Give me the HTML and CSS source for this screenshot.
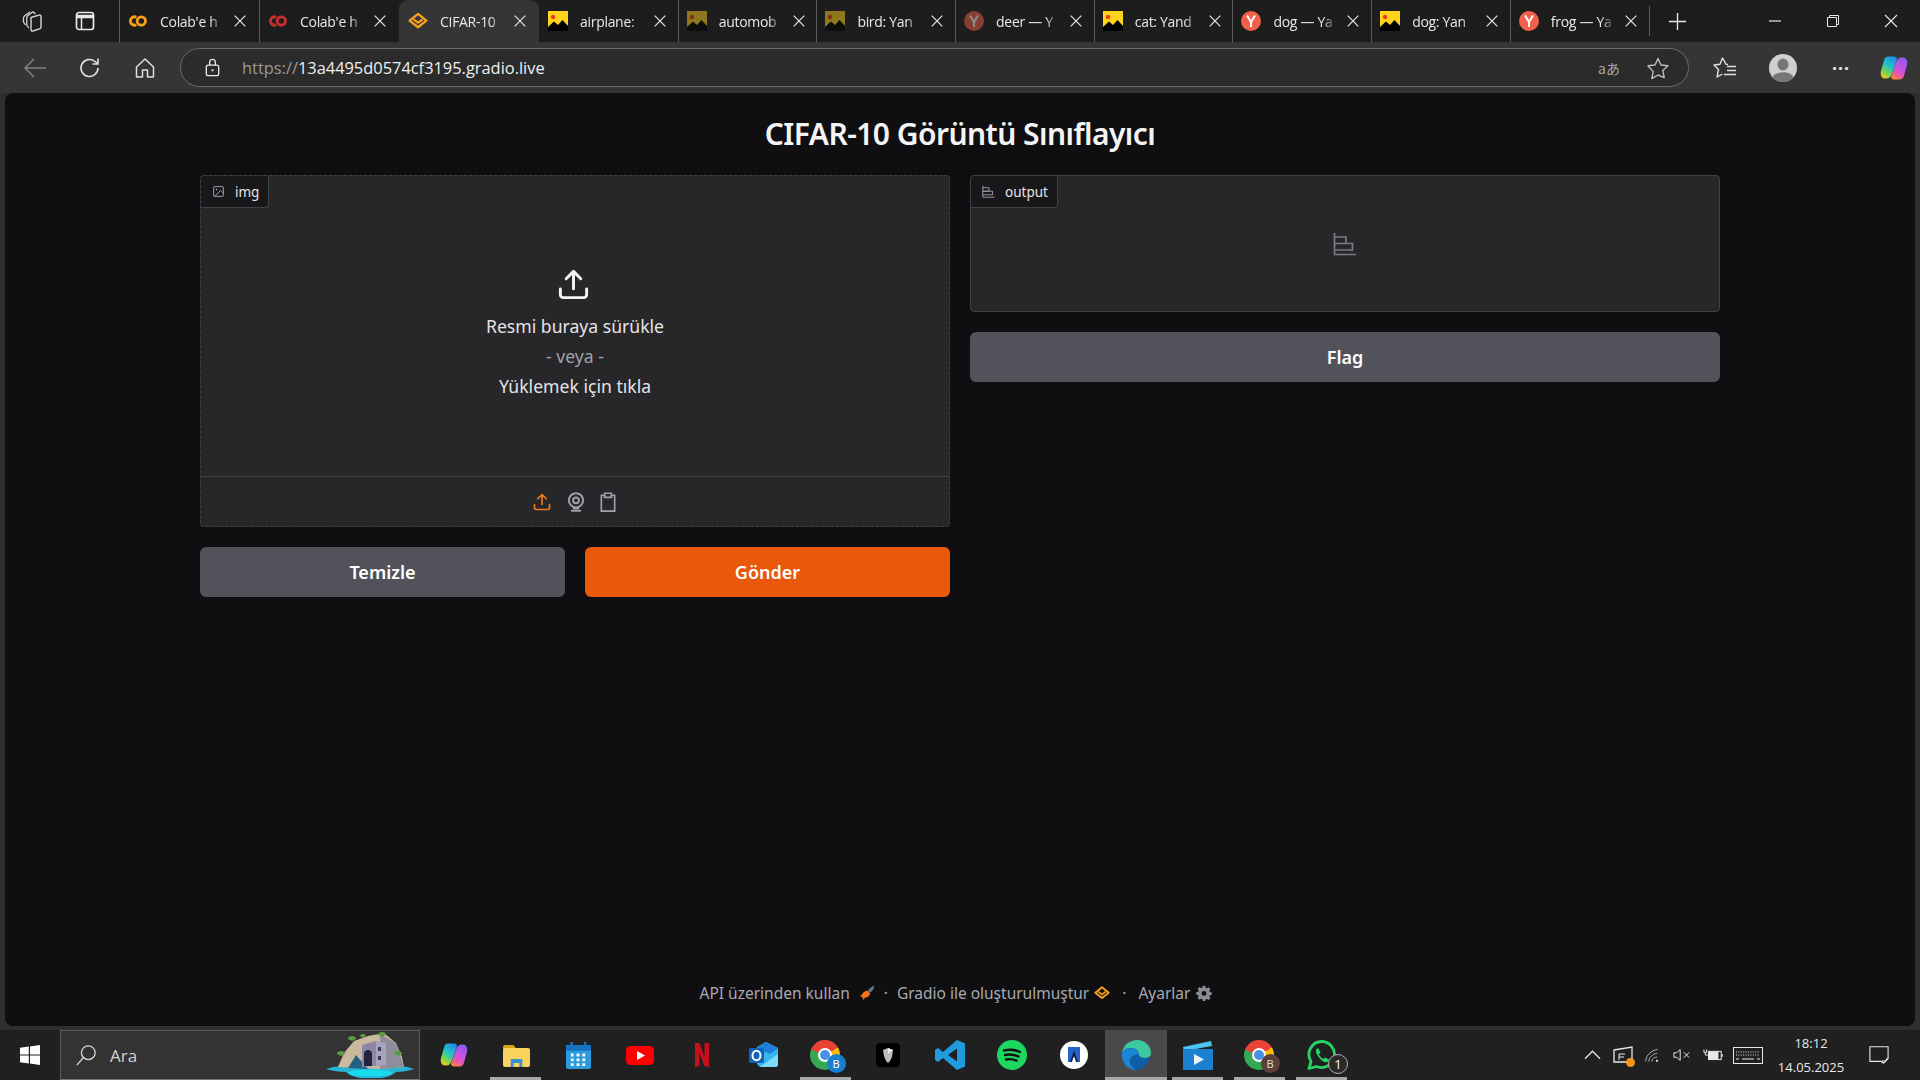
FILE: index.html
```html
<!DOCTYPE html>
<html lang="en">
    <head>
        <meta charset="UTF-8">
        <meta name="viewport" content="width=device-width, initial-scale=1.0">
        <title>CIFAR-10 Görüntü Sınıflayıcı</title>
        <link rel="stylesheet" href="styles.css">
    </head>
    <body>
        <svg class="defs" width="0" height="0">
            <defs>
                <linearGradient id="cp-left" x1="0.7" y1="0" x2="0.2" y2="1">
                    <stop offset="0" stop-color="#1f8fe8"/>
                    <stop offset=".45" stop-color="#22c8c0"/>
                    <stop offset=".75" stop-color="#7ed348"/>
                    <stop offset="1" stop-color="#f7c81e"/>
                </linearGradient>
                <linearGradient id="cp-right" x1="0.7" y1="0" x2="0.3" y2="1">
                    <stop offset="0" stop-color="#8a5cf0"/>
                    <stop offset=".55" stop-color="#d050e0"/>
                    <stop offset=".85" stop-color="#f0608a"/>
                    <stop offset="1" stop-color="#f58a30"/>
                </linearGradient>
                <symbol id="i-colab" viewBox="0 0 24 24">
                    <path d="M10 7.500a5 5 0 1 0 0 9" fill="none" stroke="currentColor" stroke-width="3.400"/>
                    <circle cx="16" cy="12" r="5" fill="none" stroke="currentColor" stroke-width="3.400"/>
                </symbol>
                <symbol id="i-gradio" viewBox="0 0 24 24">
                    <path d="M12 3.500 22 11.500 12 19.500 2 11.500Z" fill="none" stroke="currentColor" stroke-width="2.800" stroke-linejoin="round"/>
                    <path d="M6.500 10 12 14 17.500 10" fill="none" stroke="currentColor" stroke-width="2.600"/>
                </symbol>
                <symbol id="i-photo" viewBox="0 0 20 20">
                    <rect width="20" height="20" fill="#ffd21e"/>
                    <circle cx="5" cy="6" r="2.200" fill="#f03a17"/>
                    <path d="M0 20V16L6 10.500 10 14 14.500 9 20 15V20Z" fill="#000"/>
                </symbol>
                <symbol id="i-yandex" viewBox="0 0 20 20">
                    <circle cx="10" cy="10" r="10" fill="#f0604a"/>
                    <path d="M6 4.500 10 11V16M14 4.500 10 11" fill="none" stroke="#fff" stroke-width="2"/>
                </symbol>
                <symbol id="i-x" viewBox="0 0 12 12">
                    <path d="M.7.7l10.600 10.600M11.300.7.7 11.300" stroke="currentColor" stroke-width="1.200"/>
                </symbol>
                <symbol id="i-upload" viewBox="0 0 24 24">
                    <path d="M21 15v4a2 2 0 0 1-2 2H5a2 2 0 0 1-2-2v-4M17 8l-5-5-5 5M12 3v12" fill="none" stroke="currentColor" stroke-width="2" stroke-linecap="round" stroke-linejoin="round"/>
                </symbol>
                <symbol id="i-chart" viewBox="0 0 24 24">
                    <path d="M1.500 1V22.500H23M1.500 5H13V11.500H1.500M1.500 11.500H19.500V18H1.500" fill="none" stroke="currentColor" stroke-width="1.700"/>
                </symbol>
                <symbol id="i-copilot" viewBox="0 0 28 26">
                    <path d="M8 1.500h6c2 0 3.500 1.200 2.800 3.200L12 18.500c-1 3-3 5-5.500 5H5C1.800 23.500 0 20 1 16L4 5.500C4.600 3 6 1.500 8 1.500Z" fill="url(#cp-left)"/>
                    <path d="M20 24.500h-6c-2 0-3.500-1.200-2.800-3.200L16 7.500c1-3 3-5 5.500-5H23c3.200 0 5 3.500 4 7.500l-3 10.500c-.6 2.500-2 4-4 4Z" fill="url(#cp-right)"/>
                </symbol>
            </defs>
        </svg>

        <div class="screen">
            <header class="tabstrip">
                <div class="strip-left">
                    <svg class="strip-ico" viewBox="0 0 24 24"><path d="M11 8.500 19 6.200c1.300-.4 2 .3 2 1.500V18c0 1-.5 1.600-1.500 1.900L13 22c-1.300.4-2-.3-2-1.500Z" fill="none" stroke="#d6d6d6" stroke-width="1.400" stroke-linejoin="round"/><path d="M15.500 5 14 3.500c-.8-.7-1.600-.6-2.300 0L7.500 7c-.5.5-.7 1-.7 1.700V16l2 3" fill="none" stroke="#d6d6d6" stroke-width="1.300"/><path d="M10 3 5 6.500c-1 .8-1.500 1.400-1.500 2.500V13l2 3" fill="none" stroke="#d6d6d6" stroke-width="1.300"/></svg>
                    <svg class="strip-ico" viewBox="0 0 24 24"><rect x="3.500" y="3.500" width="17" height="17" rx="2.500" fill="none" stroke="#e8e8e8" stroke-width="1.700"/><path d="M3.500 7.500h17" stroke="#e8e8e8" stroke-width="3.500"/><path d="M8.500 8v12" stroke="#e8e8e8" stroke-width="1.500"/></svg>
                </div>
                <div class="tab tab-wide"><svg class="fav fav-orange"><use href="#i-colab"/></svg><span class="tab-title">Colab'e h</span><svg class="tab-x"><use href="#i-x"/></svg></div>
                <div class="tab tab-wide"><svg class="fav fav-red"><use href="#i-colab"/></svg><span class="tab-title">Colab'e h</span><svg class="tab-x"><use href="#i-x"/></svg></div>
                <div class="tab tab-active"><svg class="fav fav-orange"><use href="#i-gradio"/></svg><span class="tab-title">CIFAR-10</span><svg class="tab-x"><use href="#i-x"/></svg></div>
                <div class="tab"><svg class="fav"><use href="#i-photo"/></svg><span class="tab-title">airplane:</span><svg class="tab-x"><use href="#i-x"/></svg></div>
                <div class="tab"><svg class="fav fav-dim"><use href="#i-photo"/></svg><span class="tab-title">automob</span><svg class="tab-x"><use href="#i-x"/></svg></div>
                <div class="tab"><svg class="fav fav-dim"><use href="#i-photo"/></svg><span class="tab-title">bird: Yan</span><svg class="tab-x"><use href="#i-x"/></svg></div>
                <div class="tab"><svg class="fav fav-dim"><use href="#i-yandex"/></svg><span class="tab-title">deer — Y</span><svg class="tab-x"><use href="#i-x"/></svg></div>
                <div class="tab"><svg class="fav"><use href="#i-photo"/></svg><span class="tab-title">cat: Yand</span><svg class="tab-x"><use href="#i-x"/></svg></div>
                <div class="tab"><svg class="fav"><use href="#i-yandex"/></svg><span class="tab-title">dog — Ya</span><svg class="tab-x"><use href="#i-x"/></svg></div>
                <div class="tab"><svg class="fav"><use href="#i-photo"/></svg><span class="tab-title">dog: Yan</span><svg class="tab-x"><use href="#i-x"/></svg></div>
                <div class="tab"><svg class="fav"><use href="#i-yandex"/></svg><span class="tab-title">frog — Ya</span><svg class="tab-x"><use href="#i-x"/></svg></div>
                <div class="tab-plus"><svg viewBox="0 0 20 20"><path d="M10 1v18M1 10h18" stroke="#e8e8e8" stroke-width="1.400"/></svg></div>
                <div class="win-btns">
                    <svg viewBox="0 0 14 14"><path d="M1 7h12" stroke="#e8e8e8" stroke-width="1.200"/></svg>
                    <svg viewBox="0 0 14 14"><path d="M1.500 3.500h9v9h-9ZM3.500 3.500V1.500h9v9h-2" fill="none" stroke="#e8e8e8" stroke-width="1"/></svg>
                    <svg viewBox="0 0 14 14"><path d="M1 1l12 12M13 1 1 13" stroke="#e8e8e8" stroke-width="1.100"/></svg>
                </div>
            </header>

            <div class="toolbar">
                <div class="nav-btns">
                    <svg viewBox="0 0 24 24"><path d="M23 12H2M11 3l-9 9 9 9" fill="none" stroke="#808080" stroke-width="1.500"/></svg>
                    <svg viewBox="0 0 24 24"><path d="M20 12a8.500 8.500 0 1 1-3-6.500L20 8M20 2.500V8h-5.500" fill="none" stroke="#e0e0e0" stroke-width="1.600"/></svg>
                    <svg viewBox="0 0 24 24"><path d="M3.500 11 12 3l8.500 8v10h-6v-7h-5v7h-6Z" fill="none" stroke="#e0e0e0" stroke-width="1.500" stroke-linejoin="round"/></svg>
                </div>
                <div class="urlbar">
                    <svg class="lock" viewBox="0 0 20 20"><rect x="3.500" y="7.500" width="13" height="11" rx="2" fill="none" stroke="#e8e8e8" stroke-width="1.400"/><path d="M7 7.500V4.500a3 3 0 0 1 6 0v3" fill="none" stroke="#e8e8e8" stroke-width="1.400"/><circle cx="10" cy="13" r="1.200" fill="#e8e8e8"/></svg>
                    <span class="url"><span class="url-scheme">https://</span>13a4495d0574cf3195.gradio.live</span>
                    <span class="translate">aあ</span>
                    <svg class="star" viewBox="0 0 24 24"><path d="M12 2.500 15 9l7 .8-5.200 4.800 1.400 7L12 19l-6.200 3.600 1.400-7L2 9.800 9 9Z" fill="none" stroke="#bdbdbd" stroke-width="1.400" stroke-linejoin="round"/></svg>
                </div>
                <div class="tool-right">
                    <svg class="favs" viewBox="0 0 24 24"><path d="M15 8.500 13 8.200 9.500 2 7 8.200 1 9l4.500 4.500L4 21l5.500-3" fill="none" stroke="#e0e0e0" stroke-width="1.400" stroke-linejoin="round"/><path d="M14 10.500h9M14 14.500h9M11 18.500h12" stroke="#e0e0e0" stroke-width="1.400"/></svg>
                    <svg class="avatar" viewBox="0 0 28 28"><circle cx="14" cy="14" r="14" fill="#cfcfcf"/><ellipse cx="14" cy="10.500" rx="5.500" ry="6" fill="#777"/><path d="M3.500 23.500c2-7 19-7 21 0-5 6-16 6-21 0Z" fill="#777"/></svg>
                    <span class="more">···</span>
                    <svg class="copilot-top"><use href="#i-copilot"/></svg>
                </div>
            </div>

            <main class="page">
                <h1 class="title">CIFAR-10 Görüntü Sınıflayıcı</h1>
                <div class="columns">
                    <section class="col">
                        <div class="panel panel-input">
                            <div class="block-label">
                                <svg viewBox="0 0 24 24"><rect x="3" y="3" width="18" height="18" rx="2" fill="none" stroke="currentColor" stroke-width="1.800"/><circle cx="8.500" cy="8.500" r="1.500" fill="currentColor"/><path d="M21 15l-5-5L5 21" fill="none" stroke="currentColor" stroke-width="1.800"/></svg>
                                img
                            </div>
                            <div class="dropzone">
                                <svg class="drop-ico"><use href="#i-upload"/></svg>
                                <div class="drop-line">Resmi buraya sürükle</div>
                                <div class="drop-line drop-or">- veya -</div>
                                <div class="drop-line">Yüklemek için tıkla</div>
                            </div>
                            <div class="source-row">
                                <svg class="src-ico src-on"><use href="#i-upload"/></svg>
                                <svg class="src-ico" viewBox="0 0 24 24"><circle cx="12" cy="10" r="8.500" fill="none" stroke="currentColor" stroke-width="2.400"/><circle cx="12" cy="10" r="3.500" fill="none" stroke="currentColor" stroke-width="2.400"/><path d="M6 22.500h12M8.500 19.500h7" stroke="currentColor" stroke-width="2.200"/></svg>
                                <svg class="src-ico src-clip" viewBox="0 0 24 24"><path d="M8 4H4v19h16V4H16" fill="none" stroke="currentColor" stroke-width="2"/><path d="M8 1.500h8v5H8Z" fill="none" stroke="currentColor" stroke-width="2"/></svg>
                            </div>
                        </div>
                        <div class="btn-row">
                            <button class="btn btn-secondary">Temizle</button>
                            <button class="btn btn-primary">Gönder</button>
                        </div>
                    </section>
                    <section class="col">
                        <div class="panel panel-output">
                            <div class="block-label">
                                <svg><use href="#i-chart"/></svg>
                                output
                            </div>
                            <svg class="empty-ico"><use href="#i-chart"/></svg>
                        </div>
                        <button class="btn btn-secondary">Flag</button>
                    </section>
                </div>
                <footer class="page-foot">
                    <span>API üzerinden kullan</span>
                    <svg class="foot-ico" viewBox="0 0 20 20"><path d="M11 7.500C13 4 16 2 19 1c0 3-2 7-6 9Z" fill="#6b7280"/><path d="M10 7l4 4c-1 3-4 5-7 5l-1 3-2-4-3-1 3-2c0-2 3-4 6-5Z" fill="#f97316"/></svg>
                    <span class="foot-dot">·</span>
                    <span>Gradio ile oluşturulmuştur</span>
                    <svg class="foot-ico foot-logo"><use href="#i-gradio"/></svg>
                    <span class="foot-dot foot-dot-wide">·</span>
                    <span>Ayarlar</span>
                    <svg class="foot-ico foot-gear" viewBox="0 0 20 20"><path d="M8.500 1h3l.5 2.400 1.700.7L15.800 2.800l2.200 2.200-1.300 2.100.7 1.700 2.400.5v3l-2.400.5-.7 1.700 1.300 2.100-2.200 2.200-2.100-1.300-1.700.7-.5 2.400h-3L8 17.900l-1.700-.7-2.100 1.300L2 16.300l1.300-2.100-.7-1.700L.2 12V9l2.400-.5.7-1.700L2 4.700 4.200 2.500l2.100 1.300L8 3.100Z" fill="#8b8b93"/><circle cx="10" cy="10.500" r="3" fill="#0f0f11"/></svg>
                </footer>
            </main>

            <footer class="taskbar">
                <div class="start">
                    <svg viewBox="0 0 20 20"><path d="M0 2.800 8.800 1.600V9.400H0ZM10 1.400 20 0V9.400H10ZM0 10.600H8.800V18.400L0 17.200ZM10 10.600H20V20L10 18.600Z" fill="#fff"/></svg>
                </div>
                <div class="search">
                    <svg class="search-ico" viewBox="0 0 24 24"><circle cx="14.500" cy="9.500" r="7.500" fill="none" stroke="#d8d8d8" stroke-width="1.400"/><path d="M9 15 2 23" stroke="#d8d8d8" stroke-width="1.400"/></svg>
                    <span class="search-text">Ara</span>
                    <svg class="island" viewBox="0 0 88 48">
                        <path d="M0 38c10-3 20-4 30-4h30c10 0 20 1 28 4-6 2-12 3-18 3-3 3-8 5-14 6H34c-6-1-11-3-14-6-6 0-14-1-20-3Z" fill="#28b4d4"/>
                        <ellipse cx="44" cy="42" rx="22" ry="3.500" fill="#18dcec"/>
                        <path d="M12 36 18 22 28 10 42 5 58 2 70 12 76 26 78 36 54 38 30 37Z" fill="#cbb99c"/>
                        <path d="M54 3 70 12 78 36 54 38Z" fill="#8f8f9c"/>
                        <path d="M22 37 30 24 42 38Z" fill="#235f80"/>
                        <path d="M36 14 50 10 60 12V34L36 36Z" fill="#8d85aa"/>
                        <path d="M50 10 60 12V34L50 35Z" fill="#a9a2bf"/>
                        <path d="M38 35V23a3.500 3.500 0 0 1 8 0V35Z" fill="#26263a"/>
                        <path d="M52 16h3v4h-3ZM52 25h3v4h-3Z" fill="#3a3a55"/>
                        <path d="M22 8a4 3 0 0 1 8 0l-4 2Z M52 4a4 3 0 0 1 8 0l-4 2Z M11 23a4 3 0 0 1 8 0l-4 2Z M68 23a4 3 0 0 1 8 0l-4 2Z M34 5a3 2 0 0 1 6 0l-3 2Z" fill="#5d9a48"/>
                    </svg>
                </div>
                <div class="task-icons">
                    <div class="task"><svg class="t-copilot"><use href="#i-copilot"/></svg></div>
                    <div class="task task-open">
                        <svg class="t-files" viewBox="0 0 28 23" preserveAspectRatio="none"><path d="M0 3a2 2 0 0 1 2-2h9l3 4H0Z" fill="#d9a514"/><rect y="4" width="28" height="19" rx="2" fill="#f8d35e"/><path d="M8 23V15h12v8h-3v-4h-6v4Z" fill="#3a8ed4"/></svg>
                    </div>
                    <div class="task">
                        <svg class="t-cal" viewBox="0 0 26 28"><rect y="3" width="26" height="25" rx="2" fill="#2a9bdf"/><rect y="3" width="26" height="6" fill="#1770c0"/><path d="M6 0v6M20 0v6" stroke="#1770c0" stroke-width="2.500"/><path d="M5 12h3v3H5Zm6 0h3v3h-3Zm6 0h3v3h-3ZM5 17h3v3H5Zm6 0h3v3h-3Zm6 0h3v3h-3ZM5 22h3v3H5Zm6 0h3v3h-3Zm6 0h3v3h-3Z" fill="#fff"/></svg>
                    </div>
                    <div class="task">
                        <svg class="t-yt" viewBox="0 0 28 19"><rect width="28" height="19" rx="4.500" fill="#f00"/><path d="M11 5l8 4.500-8 4.500Z" fill="#fff"/></svg>
                    </div>
                    <div class="task">
                        <svg class="t-nf" viewBox="0 0 14 24"><path d="M0 0h4.500l5 14V0H14V24L9.500 23 4.500 10V23L0 24Z" fill="#c8101a"/></svg>
                    </div>
                    <div class="task">
                        <svg class="t-ol" viewBox="0 0 32 28"><path d="M18 1 30 7V23c0 2-1 3-3 3H12L9 23V6Z" fill="#35b8f0"/><path d="M17 1 30 7 22 13 9 7Z" fill="#1f7fd8"/><path d="M12 26 30 13V23c0 2-1 3-3 3Z" fill="#7fdcf8"/><rect x="1" y="7" width="15" height="15" rx="1.500" fill="#0f63bd"/><ellipse cx="8.500" cy="14.500" rx="4" ry="4.800" fill="none" stroke="#fff" stroke-width="2"/></svg>
                    </div>
                    <div class="task task-open">
                        <div class="chrome"><span class="chrome-dot"></span><span class="chrome-badge badge-blue">B</span></div>
                    </div>
                    <div class="task">
                        <svg class="t-black" viewBox="0 0 24 24"><rect width="24" height="24" rx="4" fill="#000"/><path d="M7 7 12 5l5 2-1 7-2 4-2 2-2-2-2-5Z" fill="#bdbdbd"/><path d="M12 5l5 2-5 4Z" fill="#eee"/></svg>
                    </div>
                    <div class="task">
                        <svg class="t-ico" viewBox="0 0 30 30"><path d="M22 0 30 3.500V26.500L22 30 8 18 3 22 0 20V10L3 8 8 12ZM22 8.500 13 15 22 21.500Z" fill="#1f9ce0"/></svg>
                    </div>
                    <div class="task">
                        <svg class="t-ico" viewBox="0 0 30 30"><circle cx="15" cy="15" r="15" fill="#1ed760"/><path d="M7 10.500c6-1.500 11-1 16 1.500M8 15c5-1 9-.6 13.500 1.500M9 19.500c4-.8 7-.4 10.500 1.200" fill="none" stroke="#111" stroke-width="2.400" stroke-linecap="round"/></svg>
                    </div>
                    <div class="task">
                        <svg class="t-ico" viewBox="0 0 30 30"><circle cx="15" cy="15" r="14" fill="#fff"/><path d="M9 7h12v15h-3l-3-6-3 6H9Z" fill="#2563c9"/><path d="M12 22l3-9 3 9" fill="none" stroke="#10204a" stroke-width="1.800"/></svg>
                    </div>
                    <div class="task task-open task-active">
                        <svg class="t-ico" viewBox="0 0 30 30"><path d="M1 13C2 5 9 0 16 0c8 0 14 6 14 13 0 3-2 5-6 5-4 0-6-1-6-3 0-4-3-7-8-7-4 0-7 1-9 5Z" fill="#3cc9a0"/><path d="M1 13c2-4 5-5 9-5 5 0 8 3 8 7-6-1-10 3-9 8 1 3 3 5 6 7C7 30 0 23 1 13Z" fill="#1a86d8"/><path d="M9 23c-1-5 3-9 9-8 0 2 2 3 6 3 2 0 4-1 5-2-1 7-7 14-14 14-3-2-5-4-6-7Z" fill="#0f5fa8"/></svg>
                    </div>
                    <div class="task task-open">
                        <svg class="t-ico" viewBox="0 0 30 30"><path d="M0 7 28 1 29 6 1 11Z" fill="#4cc4f0"/><rect y="9" width="30" height="21" fill="#1b80d0"/><path d="M11 14 21 19.500 11 25Z" fill="#e8f4fc"/></svg>
                    </div>
                    <div class="task task-open">
                        <div class="chrome"><span class="chrome-dot"></span><span class="chrome-badge badge-brown">B</span></div>
                    </div>
                    <div class="task task-open">
                        <svg class="t-ico" viewBox="0 0 30 30"><path d="M15 1.500a13 13 0 0 0-11 20L2 28.500l7.500-2A13 13 0 1 0 15 1.500Z" fill="none" stroke="#25d366" stroke-width="2.800" stroke-linejoin="round"/><path d="M10 8.500c-2 2-1 5 2 9s7 6 9 4l1-2-4-2-1.500 1.500c-2-1-3.500-2.500-4.500-4.500L13.500 12.500l-2-4Z" fill="#25d366"/></svg>
                        <span class="wa-badge">1</span>
                    </div>
                </div>
                <div class="tray">
                    <svg class="tr-chev" viewBox="0 0 18 10"><path d="M1 9l8-8 8 8" fill="none" stroke="#e8e8e8" stroke-width="1.300"/></svg>
                    <span class="tr-net">
                        <svg viewBox="0 0 20 18"><path d="M1 4 19 1V16H1Z" fill="none" stroke="#e8e8e8" stroke-width="1.300"/><path d="M6 8h6M6 11h5M6 8v6" stroke="#e8e8e8" stroke-width="1"/></svg>
                        <span class="tr-dot"></span>
                    </span>
                    <svg class="tr-wifi" viewBox="0 0 20 18"><path d="M1 17C1 9 8 2 17 1M5 17c0-5 5-10 11-11M9 17c0-3 3-6 7-6" fill="none" stroke="#bdbdbd" stroke-width="1.200"/><circle cx="16" cy="16" r="1.500" fill="#e8e8e8"/></svg>
                    <svg class="tr-sound" viewBox="0 0 20 14"><path d="M1 4.500h3L8 1V13L4 9.500H1Z" fill="none" stroke="#e8e8e8" stroke-width="1.100"/><path d="M12 4l6 6M18 4l-6 6" stroke="#e8e8e8" stroke-width="1.100"/></svg>
                    <svg class="tr-batt" viewBox="0 0 22 14"><rect x="6" y="3" width="14" height="9" fill="none" stroke="#e8e8e8" stroke-width="1.100"/><rect x="6" y="3" width="11" height="9" fill="#e8e8e8"/><path d="M21 6v3" stroke="#e8e8e8" stroke-width="1.400"/><path d="M1 1v3h3V1M2.500 4v3h3" fill="none" stroke="#e8e8e8" stroke-width="1.100"/></svg>
                    <svg class="tr-kbd" viewBox="0 0 30 17"><rect x=".5" y=".5" width="29" height="16" fill="none" stroke="#e8e8e8"/><path d="M3 5h24M3 8h24" stroke="#e8e8e8" stroke-dasharray="1 1.400"/><path d="M3 12h3M9 12h12M24 12h3" stroke="#e8e8e8"/></svg>
                    <div class="clock"><span>18:12</span><span>14.05.2025</span></div>
                    <svg class="tr-note" viewBox="0 0 22 20"><path d="M1 1h20V14l-5 5-3-2H1Z" fill="none" stroke="#e8e8e8" stroke-width="1.200"/><path d="M14 16c3 2 6 0 6-3" fill="none" stroke="#e8e8e8" stroke-width="1.200"/></svg>
                </div>
            </footer>
        </div>
    </body>
</html>
```

FILE: styles.css
```css
* { box-sizing: border-box; }

body {
    margin: 0;
    background: #2f2f2f;
    font-family: "Noto Sans", sans-serif;
    overflow: hidden;
}
.defs { position: absolute; }
.screen {
    width: 1920px;
    height: 1080px;
    display: flex;
    flex-direction: column;
    background: #2f2f2f;
}

/* tab strip */
.tabstrip {
    height: 42px;
    display: flex;
    background: #1d1d1d;
    font-family: "Open Sans", sans-serif;
    color: #e8e8e8;
}
.strip-left {
    width: 119px;
    display: flex;
    align-items: center;
    padding-left: 20px;
    gap: 29px;
}
.strip-ico { width: 24px; height: 24px; }
.tab {
    width: 138.7px;
    height: 42px;
    display: flex;
    align-items: center;
    padding-left: 8px;
    border-left: 1px solid #5a5a5a;
    flex: none;
}
.tab-wide { width: 140px; }
.tab-active {
    width: 140px;
    background: #353535;
    border-left-color: transparent;
    border-radius: 9px 9px 0 0;
}
.tab-active + .tab { border-left-color: transparent; }
.fav { width: 20px; height: 20px; flex: none; }
.fav-orange { color: #f9a01b; }
.fav-red { color: #c9302c; }
.fav-dim { opacity: .5; }
.tab-title {
    width: 64px;
    margin-left: 12px;
    flex: none;
    font-size: 14px;
    letter-spacing: -.3px;
    white-space: nowrap;
    overflow: hidden;
    -webkit-mask-image: linear-gradient(to right, #000 78%, transparent 100%);
    mask-image: linear-gradient(to right, #000 78%, transparent 100%);
}
.tab-x {
    width: 12px;
    height: 12px;
    margin-left: 10px;
    flex: none;
    color: #e8e8e8;
}
.tab-plus {
    width: 56px;
    display: flex;
    align-items: center;
    justify-content: center;
    border-left: 1px solid #5a5a5a;
    height: 30px;
    margin-top: 6px;
}
.tab-plus svg { width: 19px; height: 19px; }
.win-btns {
    margin-left: auto;
    width: 152px;
    display: flex;
    align-items: center;
    justify-content: space-between;
    padding-right: 22px;
}
.win-btns svg { width: 14px; height: 14px; }

/* address bar */
.toolbar {
    height: 51px;
    display: flex;
    align-items: center;
    background: #353535;
}
.nav-btns {
    width: 180px;
    display: flex;
    align-items: center;
    gap: 31px;
    padding-left: 23px;
    flex: none;
}
.nav-btns svg { width: 24px; height: 24px; }
.urlbar {
    width: 1509px;
    height: 39px;
    display: flex;
    align-items: center;
    border: 1px solid #6b6b6b;
    border-radius: 20px;
    background: #2b2b2b;
    padding: 0 18px 0 22px;
    flex: none;
}
.lock { width: 19px; height: 19px; }
.url {
    margin-left: 20px;
    font-family: "Open Sans", sans-serif;
    font-size: 16.4px;
    color: #f0f0f0;
}
.url-scheme { color: #9a9a9a; }
.translate {
    margin-left: auto;
    font-family: "Noto Sans CJK JP", sans-serif;
    font-size: 14px;
    color: #a8a8a8;
}
.star { width: 24px; height: 24px; margin-left: 26px; }
.tool-right {
    flex: 1;
    display: flex;
    align-items: center;
    padding-left: 24px;
}
.tool-right svg { flex: none; }
.favs { width: 24px; height: 24px; }
.avatar { width: 28px; height: 28px; margin-left: 32px; }
.more {
    width: 24px;
    margin-left: 35px;
    color: #e0e0e0;
    font-size: 18px;
    font-weight: 700;
    letter-spacing: 1px;
}
.copilot-top { width: 28px; height: 26px; margin-left: 24px; }

/* gradio page */
.page {
    flex: 1;
    margin: 0 5px 4px;
    background: #0f0f11;
    border-radius: 8px;
    display: flex;
    flex-direction: column;
    align-items: center;
    color: #f4f4f5;
}
.title {
    margin: 22px 0 0;
    font-size: 30px;
    line-height: 38px;
    font-weight: 600;
    letter-spacing: -.55px;
}
.columns {
    width: 1520px;
    margin-top: 22px;
    display: grid;
    grid-template-columns: 1fr 1fr;
    gap: 20px;
}
.col {
    display: flex;
    flex-direction: column;
    gap: 20px;
}
.panel {
    position: relative;
    background: #27272a;
    border: 1px solid #3f3f46;
    border-radius: 4px;
}
.panel-input {
    height: 352px;
    border-style: dashed;
    display: flex;
    flex-direction: column;
}
.panel-output {
    height: 137px;
    display: flex;
    align-items: center;
    justify-content: center;
}
.block-label {
    position: absolute;
    top: 0;
    left: 0;
    height: 32px;
    display: flex;
    align-items: center;
    gap: 10px;
    padding: 0 9px 0 11px;
    background: #18181b;
    border-right: 1px solid #3f3f46;
    border-bottom: 1px solid #3f3f46;
    border-radius: 4px 0 4px 0;
    font-size: 13.5px;
    color: #e4e4e7;
}
.block-label svg { width: 13px; height: 13px; color: #a1a1aa; }
.dropzone {
    flex: 1;
    display: flex;
    flex-direction: column;
    align-items: center;
    padding-top: 91px;
    color: #e4e4e7;
}
.drop-ico {
    width: 35px;
    height: 35px;
    color: #f4f4f5;
    margin: 0 0 9px -3px;
}
.drop-line {
    font-size: 17.6px;
    line-height: 30px;
}
.drop-or { color: #a1a1aa; }
.source-row {
    height: 50px;
    border-top: 1px solid #3f3f46;
    display: flex;
    align-items: center;
    justify-content: center;
    gap: 14px;
    color: #a1a1aa;
}
.src-ico { width: 20px; height: 20px; }
.src-on { color: #ea7a20; }
.src-clip { margin-left: -2px; }
.empty-ico { width: 24px; height: 24px; color: #7a7a82; }
.btn {
    height: 50px;
    border: none;
    border-radius: 6px;
    font-family: "Noto Sans", sans-serif;
    font-size: 18px;
    font-weight: 600;
    color: #fff;
    width: 100%;
}
.btn-secondary { background: #52525b; }
.btn-primary { background: #ea580c; }
.btn-row {
    display: grid;
    grid-template-columns: 1fr 1fr;
    gap: 20px;
}
.page-foot {
    margin-top: auto;
    height: 44px;
    padding-right: 8px;
    display: flex;
    align-items: flex-start;
    gap: 5px;
    font-size: 15.5px;
    line-height: 22px;
    color: #a9a9b2;
}
.foot-ico { width: 16px; height: 16px; margin: 3px 0 0 4px; }
.foot-logo { color: #f9a01b; margin-left: 0; }
.foot-gear { margin-left: 1px; }
.foot-dot { margin: 0 4px; }
.foot-dot-wide { margin: 0 7px; }

/* windows taskbar */
.taskbar {
    height: 50px;
    display: flex;
    background: #202020;
    flex: none;
    color: #e8e8e8;
}
.start {
    width: 60px;
    display: flex;
    align-items: center;
    justify-content: center;
}
.start svg { width: 20px; height: 20px; }
.search {
    width: 360px;
    display: flex;
    align-items: center;
    background: #333;
    border: 1px solid #5a5a5a;
    border-bottom-color: #777;
    padding-left: 14px;
    flex: none;
}
.search-ico { width: 22px; height: 22px; }
.search-text {
    margin-left: 13px;
    font-size: 17px;
    font-family: "Open Sans", sans-serif;
    color: #d0d0d0;
}
.island { width: 88px; height: 48px; margin-left: auto; margin-right: 5px; }
.task-icons {
    display: flex;
    margin-left: 3px;
}
.task {
    position: relative;
    width: 62px;
    height: 50px;
    display: flex;
    align-items: center;
    justify-content: center;
}
.task-open::after {
    content: "";
    position: absolute;
    bottom: 0;
    left: 5px;
    width: 51px;
    height: 3px;
    background: #a8a8a8;
}
.task-active { background: #4a4a4a; }
.task-active::after { left: 0; width: 62px; }
.t-ico { width: 30px; height: 30px; }
.t-copilot { width: 28px; height: 26px; }
.t-files { width: 27px; height: 23px; }
.t-cal { width: 25px; height: 27px; }
.t-yt { width: 28px; height: 19px; }
.t-nf { width: 14px; height: 24px; }
.t-ol { width: 32px; height: 28px; }
.t-black { width: 24px; height: 24px; }
.chrome {
    position: relative;
    width: 30px;
    height: 30px;
    border-radius: 50%;
    background: conic-gradient(from -70deg, #ea4335 0 130deg, #fbbc04 130deg 200deg, #34a853 200deg 360deg);
    margin-left: -3px;
}
.chrome-dot {
    position: absolute;
    top: 8px;
    left: 8px;
    width: 14px;
    height: 14px;
    border-radius: 50%;
    background: #4a90e2;
    border: 2px solid #fff;
}
.chrome-badge {
    position: absolute;
    right: -6px;
    bottom: -3px;
    width: 19px;
    height: 19px;
    border-radius: 50%;
    font-size: 11px;
    line-height: 19px;
    text-align: center;
    color: #fff;
}
.badge-blue { background: #1a7fd0; }
.badge-brown { background: #5a4038; color: #ddd; }
.wa-badge {
    position: absolute;
    right: 5px;
    bottom: 6px;
    width: 20px;
    height: 20px;
    border-radius: 50%;
    border: 1px solid #b0b0b0;
    background: #2a2a2a;
    font-size: 13px;
    line-height: 18px;
    text-align: center;
    color: #f0f0f0;
}
.tray {
    flex: 1;
    display: flex;
    align-items: center;
    padding-left: 231px;
}
.tr-chev { width: 17px; height: 10px; }
.tr-net { position: relative; width: 20px; height: 18px; margin-left: 12px; }
.tr-net svg { width: 20px; height: 18px; display: block; }
.tr-dot {
    position: absolute;
    right: -2px;
    bottom: -3px;
    width: 9px;
    height: 9px;
    border-radius: 50%;
    background: #f7941d;
}
.tr-wifi { width: 15px; height: 15px; margin-left: 12px; }
.tr-sound { width: 18px; height: 14px; margin-left: 13px; }
.tr-batt { width: 20px; height: 14px; margin-left: 12px; }
.tr-kbd { width: 30px; height: 17px; margin-left: 10px; }
.clock {
    width: 70px;
    margin-left: 13px;
    display: flex;
    flex-direction: column;
    align-items: center;
    gap: 4px;
    font-family: "Open Sans", sans-serif;
    font-size: 13px;
    line-height: 20px;
}
.tr-note { width: 20px; height: 20px; margin-left: 23px; }
```
